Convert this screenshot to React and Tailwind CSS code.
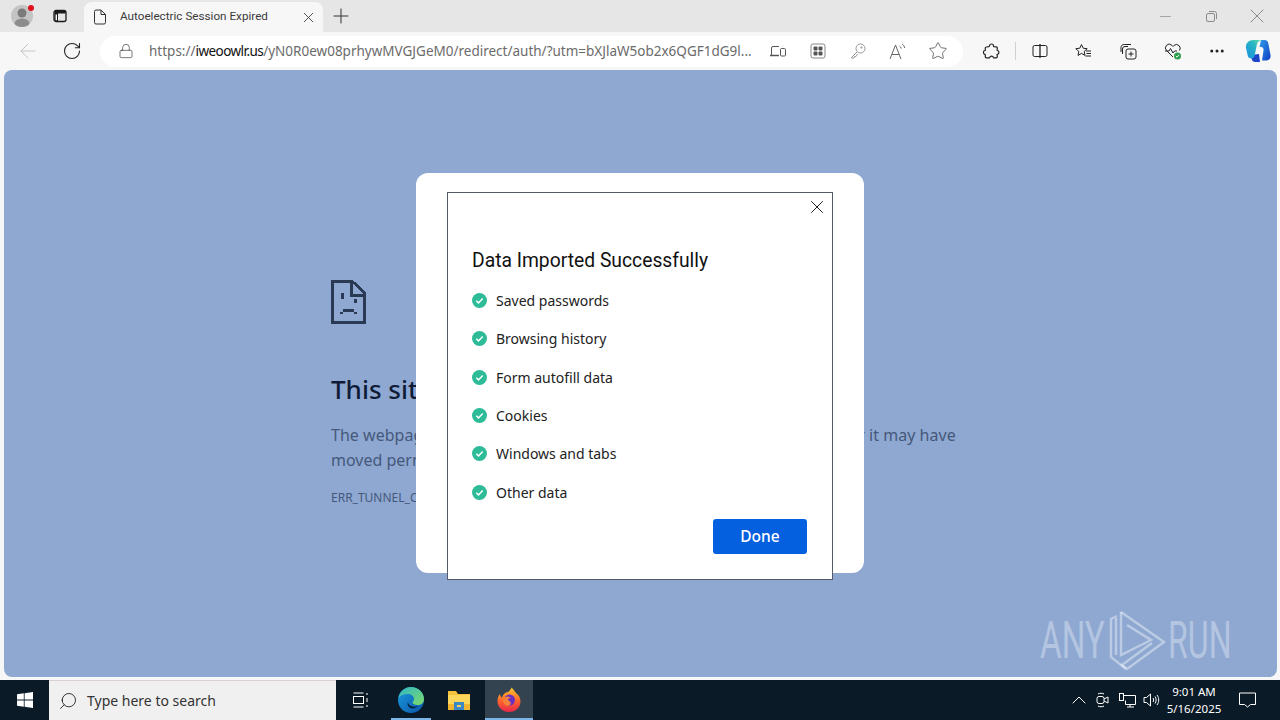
import React from "react";
import { ArrowLeft, RotateCw, Lock, Star, Plus, X, Minus, MoreHorizontal, Search, ChevronUp } from "lucide-react";

const sans = "font-['Noto_Sans','Open_Sans',sans-serif]";
const ui = "font-['Roboto','Noto_Sans',sans-serif]";

function ToolSlot({ w, children }) {
  return <div className={`${w} h-full flex items-center justify-center shrink-0`}>{children}</div>;
}

function Avatar() {
  return (
    <div className="relative w-[22px] h-[22px] rounded-full bg-[#c4c4c4] overflow-hidden flex flex-col items-center">
      <svg width="22" height="22" viewBox="0 0 22 22">
        <circle cx="11" cy="8" r="4.5" fill="#7b7b7b" />
        <ellipse cx="11" cy="19" rx="7.5" ry="5.5" fill="#8c8c8c" />
      </svg>
    </div>
  );
}

function TabStrip() {
  return (
    <div className="h-[32px] bg-[#e6e6e6] flex items-end shrink-0">
      <div className="w-[44px] h-full relative flex items-center justify-center">
        <Avatar />
        <div className="absolute left-[28px] top-[5px] w-[6px] h-[6px] rounded-full bg-[#e0101c]" />
      </div>
      <div className="w-[32px] h-full flex items-center justify-center">
        <svg width="16" height="16" viewBox="0 0 16 16" fill="none">
          <rect x="2" y="2.500" width="12" height="11" rx="2" stroke="#1a1a1a" strokeWidth="1.300" />
          <path d="M2.500 3h11v2.600H6v7.600H2.500z" fill="#1a1a1a" />
          <path d="M3.600 6.600h1.400v5.600H3.600z" fill="#fff" />
        </svg>
      </div>
      <div className="ml-[8px] w-[239px] h-[30px] bg-[#f7f7f7] rounded-t-lg flex items-center">
        <svg className="ml-[9px]" width="14" height="16" viewBox="0 0 14 16" fill="none">
          <path d="M1.500 2.500a1.500 1.500 0 0 1 1.500-1.500h5l4.500 4.500v8a1.500 1.500 0 0 1-1.500 1.500H3a1.500 1.500 0 0 1-1.500-1.500z" stroke="#333" strokeWidth="1" />
          <path d="M8 1v4.500h4.500" stroke="#333" strokeWidth="1" />
        </svg>
        <span className={`ml-[13px] text-[11.700px] text-[#3b3b3b] w-[170px] whitespace-nowrap ${ui}`}>Autoelectric Session Expired</span>
        <X className="ml-[10px] text-[#444]" size={17} strokeWidth={1.300} />
      </div>
      <div className="w-[36px] h-full flex items-center justify-center">
        <Plus size={24} strokeWidth={1} className="text-[#333]" />
      </div>
      <div className="flex-1" />
      <div className="w-[46px] h-full flex items-center justify-center"><Minus size={17} strokeWidth={1} className="text-[#8a8a8a]" /></div>
      <div className="w-[46px] h-full flex items-center justify-center">
        <svg width="11" height="11" viewBox="0 0 11 11" fill="none" stroke="#8a8a8a">
          <rect x="0.500" y="2.500" width="8" height="8" rx="1.500" />
          <path d="M3 .5h5.500a2 2 0 0 1 2 2V8" />
        </svg>
      </div>
      <div className="w-[46px] h-full flex items-center justify-center"><X size={24} strokeWidth={1} className="text-[#8a8a8a]" /></div>
    </div>
  );
}

function CopilotLogo() {
  return (
    <svg width="26" height="26" viewBox="0 0 26 26">
      <defs>
        <linearGradient id="cpa" x1="0" y1="0" x2="1" y2="1"><stop offset="0" stopColor="#2f9be8" /><stop offset="1" stopColor="#0f3fc4" /></linearGradient>
        <linearGradient id="cpb" x1="0" y1="1" x2="1" y2="0"><stop offset="0" stopColor="#1c8fe0" /><stop offset="0.600" stopColor="#24b5c4" /><stop offset="1" stopColor="#6fe0a8" /></linearGradient>
      </defs>
      <path d="M16 2h3.500c2 0 3.300 1.200 3.800 3.200L25.500 17c.6 3-1.300 5.500-4 5.500H17l1.500-10c.3-2-.7-3.500-2.500-3.500h-1.500z" fill="url(#cpa)" />
      <path d="M15 24h-4.500c-2.500 0-3.600-1.500-3.900-3.500l-.6-3.500 8-1z" fill="#1a45c8" />
      <path d="M1 10c-.5-3.500 1.500-6.500 4.500-7.500C7 2 9 2 11 2h6c-3 .5-4.500 2-5.200 5l-2 10c-.4 2-1.300 3.500-3.300 3.500S3 19.500 2.700 17.500z" fill="url(#cpb)" />
    </svg>
  );
}

function Toolbar() {
  return (
    <div className="h-[38px] bg-[#f7f7f7] flex items-center pl-[6px] shrink-0">
      <ToolSlot w="w-[44px]"><ArrowLeft size={24} strokeWidth={0.900} className="text-[#c0c0c0]" /></ToolSlot>
      <ToolSlot w="w-[44px]"><RotateCw size={20} strokeWidth={1.300} className="text-[#222]" /></ToolSlot>
      <div className="ml-[6px] w-[863px] h-[31px] bg-white rounded-full flex items-center shrink-0">
        <Lock size={16} strokeWidth={1.100} className="ml-[18px] text-[#444]" />
        <div className={`ml-[15px] w-[603px] text-[13.500px] whitespace-nowrap overflow-hidden text-[#6b6b6b] ${sans}`}>
          https://<span className="text-[#111] tracking-[-0.550px]">iweoowlr.us</span>/yN0R0ew08prhywMVGJGeM0/redirect/auth/?utm=bXJlaW5ob2x6QGF1dG9l...
        </div>
        <div className="ml-[6px] flex h-full">
          <ToolSlot w="w-[40px]">
            <svg width="16" height="14" viewBox="0 0 16 14" fill="none" stroke="#555" strokeWidth="1">
              <path d="M9 2.500H3a1.500 1.500 0 0 0-1.500 1.500v7" /><path d="M0 11.500h9" strokeWidth="1.500" />
              <rect x="10.500" y="4.500" width="5" height="7.500" rx="1" />
            </svg>
          </ToolSlot>
          <ToolSlot w="w-[40px]">
            <svg width="16" height="16" viewBox="0 0 16 16" fill="none">
              <rect x="1" y="1" width="14" height="14" rx="2" stroke="#888" strokeWidth="1" />
              <rect x="3.500" y="3.500" width="4" height="4" rx="1" fill="#555" /><rect x="8.500" y="3.500" width="4" height="4" rx="1" fill="#555" />
              <rect x="3.500" y="8.500" width="4" height="4" rx="1" fill="#555" /><rect x="8.500" y="8.500" width="4" height="4" rx="1" fill="#555" />
            </svg>
          </ToolSlot>
          <ToolSlot w="w-[40px]">
            <svg width="16" height="16" viewBox="0 0 16 16" fill="none" stroke="#999" strokeWidth="1">
              <circle cx="10.500" cy="5.500" r="4.500" /><path d="M7 9L1.500 14.500V15h2.500l.5-1.500h1.500L7 12l.5-1" /><circle cx="11.500" cy="4.500" r=".7" />
            </svg>
          </ToolSlot>
          <ToolSlot w="w-[40px]">
            <svg width="18" height="17" viewBox="0 0 18 17" fill="none" stroke="#666" strokeWidth="1">
              <path d="M1 16L6.500 2 12 16M3 11.500h7" /><path d="M10.500 3c1 .5 1.500 1.500 1.700 2.500M13 1c1.500.8 2.500 2.500 2.700 4" />
            </svg>
          </ToolSlot>
          <ToolSlot w="w-[40px]"><Star size={20} strokeWidth={1} className="text-[#555]" /></ToolSlot>
        </div>
      </div>
      <div className="ml-[8px] flex h-full items-center">
        <ToolSlot w="w-[40px]">
          <svg width="17" height="17" viewBox="0 0 17 17" fill="none" stroke="#222" strokeWidth="1.200" strokeLinejoin="round">
            <path d="M6.500 3a2 2 0 0 1 4 0l.2.700 2.500.2c.7.100 1.100.600 1.100 1.200l-.2 2.100.600.300a2.100 2.100 0 0 1 0 3.800l-.6.300.2 2c0 .8-.5 1.300-1.200 1.300h-2.400l-.3-.6a2 2 0 0 0-3.700 0l-.3.600H3.500c-.8 0-1.300-.5-1.300-1.300l.2-1.900-.7-.3a2.100 2.100 0 0 1 0-3.900l.7-.3-.2-2c0-.7.500-1.200 1.200-1.200l2.400-.3z" />
          </svg>
        </ToolSlot>
        <div className="w-[8px] h-full flex items-center justify-center"><div className="w-px h-[18px] bg-[#d0d0d0]" /></div>
        <ToolSlot w="w-[42px]">
          <svg width="16" height="16" viewBox="0 0 16 16" fill="none" stroke="#222" strokeWidth="1">
            <rect x="1" y="2.500" width="14" height="11" rx="1.500" /><path d="M8 1v14" strokeWidth="1.300" />
          </svg>
        </ToolSlot>
        <ToolSlot w="w-[45px]">
          <svg width="17" height="16" viewBox="0 0 17 16" fill="none" stroke="#222" strokeWidth="1">
            <path d="M6.500 1.500l1.700 3.700 4 .5-3 2.700.8 4-3.500-2-3.500 2 .8-4-3-2.700 4-.5z" />
            <path d="M11 8h5M11.500 10.500h4.500M10.500 13h5.500" />
          </svg>
        </ToolSlot>
        <ToolSlot w="w-[45px]">
          <svg width="17" height="17" viewBox="0 0 17 17" fill="none" stroke="#222" strokeWidth="1">
            <rect x="6" y="6" width="10" height="10" rx="2" />
            <path d="M8 3.500H5a2.500 2.500 0 0 0-2.500 2.500v5" /><path d="M11 1.500H4.500A3 3 0 0 0 1 4.500V9" />
            <path d="M11 8.500v5M8.500 11h5" />
          </svg>
        </ToolSlot>
        <ToolSlot w="w-[44px]">
          <svg width="18" height="18" viewBox="0 0 18 18" fill="none">
            <path d="M9 15L2.500 8.500a3.800 3.800 0 0 1 0-5.200 3.800 3.800 0 0 1 5.400 0L9 4.500l1.100-1.200a3.800 3.800 0 0 1 5.400 5.200" stroke="#222" strokeWidth="1" />
            <path d="M1 9h4l1.500-2.500L9 11l1.500-2H13" stroke="#222" strokeWidth="1" />
            <circle cx="13.500" cy="14" r="3.500" fill="#2e9e4f" />
            <path d="M11.800 14l1.200 1.200 2.200-2.300" stroke="#fff" strokeWidth="1" />
          </svg>
        </ToolSlot>
        <ToolSlot w="w-[43px]"><MoreHorizontal size={18} strokeWidth={2} className="text-[#222]" /></ToolSlot>
        <ToolSlot w="w-[40px]"><CopilotLogo /></ToolSlot>
      </div>
    </div>
  );
}

function SadPage() {
  return (
    <svg width="35" height="44" viewBox="0 0 36 46" fill="none" shapeRendering="crispEdges">
      <path d="M1.500 1.500H22L34.500 13v31H1.500z" stroke="#2a3a55" strokeWidth="3" />
      <path d="M21 2v14h13" stroke="#2a3a55" strokeWidth="3" />
      <rect x="10" y="14" width="3" height="6" fill="#2a3a55" />
      <rect x="24" y="20" width="3" height="4" fill="#2a3a55" />
      <rect x="12" y="30" width="12" height="3" fill="#2a3a55" />
      <rect x="9" y="33" width="3" height="3" fill="#2a3a55" />
      <rect x="24" y="33" width="3" height="3" fill="#2a3a55" />
    </svg>
  );
}

const items = ["Saved passwords", "Browsing history", "Form autofill data", "Cookies", "Windows and tabs", "Other data"];

function Check() {
  return (
    <svg width="15" height="15" viewBox="0 0 15 15" className="shrink-0">
      <circle cx="7.500" cy="7.500" r="7.500" fill="#2dbb98" />
      <path d="M4.300 7.800l2.200 2.100 4.200-4.300" fill="none" stroke="#fff" strokeWidth="1.500" />
    </svg>
  );
}

function Dialog() {
  return (
    <div className="absolute left-[412px] top-[103px] w-[448px] h-[400px] bg-white rounded-xl">
      <div className="absolute left-[31px] top-[19px] w-[386px] h-[388px] bg-white border border-[#555b66] pl-[24px] pt-[54px]">
        <X size={22} strokeWidth={1} className="absolute right-[4px] top-[3px] text-[#111]" />
        <h1 className={`text-[19.300px] leading-[28px] text-[#111] ${ui}`}>Data Imported Successfully</h1>
        <ul className="mt-[14.400px] flex flex-col gap-[16.400px]">
          {items.map((t) => (
            <li key={t} className={`flex items-center h-[22px] gap-[9px] text-[14px] text-[#222] ${sans}`}>
              <Check />
              <span>{t}</span>
            </li>
          ))}
        </ul>
        <div className="flex justify-end pr-[25px] mt-[15.600px]">
          <button className={`w-[94px] h-[35px] rounded-[3px] bg-[#0560df] text-white text-[15.500px] font-medium ${sans}`}>Done</button>
        </div>
      </div>
    </div>
  );
}

function Watermark() {
  return (
    <div className="absolute right-[47px] bottom-[2px] flex items-center text-white/35 font-['Roboto',sans-serif] text-[51px] font-normal leading-none select-none">
      <span className="inline-block w-[60px] origin-left scale-x-[0.65] whitespace-nowrap">ANY</span>
      <svg width="65" height="70" viewBox="0 0 65 70" fill="none" stroke="#ffffff" strokeOpacity="0.4" strokeWidth="2.500" className="ml-[5px] -mr-[2px]">
        <path d="M16 7L59 37 22 64 17 60 47 38" />
        <path d="M16 7V50L46 35 22 20" />
        <path d="M12 11L6 14V52L21 64" />
        <path d="M11 13V50" />
      </svg>
      <span className="inline-block w-[62px] origin-left scale-x-[0.63] whitespace-nowrap">RUN</span>
    </div>
  );
}

function ErrorPage() {
  return (
    <div className="flex-1 ml-[4px] mr-[3px] bg-[#8ea8d2] rounded-lg relative overflow-hidden">
      <div className={`pl-[327px] pt-[210px] w-[955px] ${sans}`}>
        <SadPage />
        <h2 className="mt-[47px] text-[26px] leading-[36px] font-medium text-[#101c36] whitespace-nowrap">This site can't be reached</h2>
        <p className="mt-[16px] text-[16px] leading-[25px] text-[#46587a]">
          <span className="block whitespace-nowrap tracking-[0.030px]">The webpage at https://iweoowlr.us/yN0 might be temporarily down or it may have</span>
          <span className="block">moved permanently to a new web address.</span>
        </p>
        <p className="mt-[16px] text-[12px] leading-[18px] text-[#46587a]">ERR_TUNNEL_CONNECTION_FAILED</p>
      </div>
      <Dialog />
      <Watermark />
    </div>
  );
}

function EdgeLogo() {
  return (
    <svg width="26" height="26" viewBox="0 0 26 26">
      <defs>
        <linearGradient id="eg1" x1="0" y1="0" x2="1" y2="1"><stop offset="0" stopColor="#2fb5c4" /><stop offset="1" stopColor="#7fdc6a" /></linearGradient>
        <linearGradient id="eg2" x1="0" y1="0" x2="1" y2="1"><stop offset="0" stopColor="#1a9ce0" /><stop offset="1" stopColor="#0c55a8" /></linearGradient>
      </defs>
      <circle cx="13" cy="13" r="13" fill="url(#eg2)" />
      <path d="M0.500 11C2 4 7 0 13 0c7 0 13 5 13 12 0 4-3 6-6.500 6-3 0-5-1-5-2.500 0-1 1.500-1.500 1.500-3.500 0-3-3-5-6-5C6 7 2.500 8 0.500 11z" fill="url(#eg1)" />
      <path d="M10 15c0 2 1.500 4 4.500 4.500 2 .3 4 .1 5.500-.5-1.500 1.500-4 3-6.500 2.500C10 20.500 9 17 10 15z" fill="#06253f" />
    </svg>
  );
}

function FolderLogo() {
  return (
    <svg width="24" height="22" viewBox="0 0 24 22">
      <path d="M1 2h8l2 3h12v16H1z" fill="#f3c13a" />
      <rect x="1" y="6" width="22" height="15" fill="#fbd75c" />
      <rect x="1" y="15" width="22" height="6" fill="#f2b632" />
      <rect x="7" y="13" width="10" height="8" fill="#3a88c8" />
      <rect x="10" y="16" width="4" height="2" fill="#fbd75c" />
    </svg>
  );
}

function FirefoxLogo() {
  return (
    <svg width="26" height="26" viewBox="0 0 26 26">
      <defs>
        <linearGradient id="ff1" x1="0.500" y1="0" x2="0.500" y2="1"><stop offset="0" stopColor="#ffc92e" /><stop offset="0.500" stopColor="#ff6a2b" /><stop offset="1" stopColor="#e8264b" /></linearGradient>
      </defs>
      <path d="M13 25C6 25 1.500 20 1.500 14c0-3 1-5.500 2.500-7 0 2 .8 3 2 3.500C7 7 9 5.500 12 5c2-1.500 3-3 3.500-4.500C18 3 19 5 20 6c3 2 4.500 5 4.500 8.500C24.500 20 20 25 13 25z" fill="url(#ff1)" />
      <circle cx="13.500" cy="13" r="5.500" fill="#6a2fc0" />
      <path d="M7 12c2-3 6-3 8-1-2 0-3 1-3 2 2 1 4 3 2 5-3 2-7 0-7-6z" fill="#ff8a2e" opacity="0.900" />
    </svg>
  );
}

function Taskbar() {
  return (
    <div className="h-[40px] bg-[#0a1a27] flex items-center shrink-0 text-white">
      <div className="w-[49px] h-full flex items-center justify-center">
        <svg width="16" height="16" viewBox="0 0 16 16" fill="#fff">
          <path d="M0 2.300L6.800 1.300V7.600H0zM7.600 1.200L16 0V7.600H7.600zM0 8.400H6.800V14.700L0 13.700zM7.600 8.400H16V16L7.600 14.800z" />
        </svg>
      </div>
      <div className="w-[287px] h-full bg-[#f0f0f0] flex items-center border-t border-[#d8d0d4]">
        <Search size={20} strokeWidth={1} className="ml-[9px] text-[#111] -scale-x-100" />
        <span className={`ml-[9px] text-[14px] text-[#333] ${sans}`}>Type here to search</span>
      </div>
      <div className="w-[49px] h-full flex items-center justify-center">
        <svg width="16" height="16" viewBox="0 0 16 16" fill="none" stroke="#fff" strokeWidth="1">
          <path d="M0.500 1h10M0.500 15h10" /><rect x="0.500" y="4.500" width="10" height="7" /><path d="M14 1v2M14 6v4M14 13v2" />
        </svg>
      </div>
      <div className="w-[2px]" />
      <div className="w-[48px] h-full flex items-center justify-center relative">
        <EdgeLogo />
        <div className="absolute left-[4px] right-[4px] bottom-0 h-[2px] bg-[#7cb6e8]" />
      </div>
      <div className="w-[48px] h-full flex items-center justify-center"><FolderLogo /></div>
      <div className="ml-[2px] w-[48px] h-full bg-[#33434f] flex items-center justify-center relative">
        <FirefoxLogo />
        <div className="absolute inset-x-0 bottom-0 h-[2px] bg-[#7cb6e8]" />
      </div>
      <div className="flex-1" />
      <div className="flex items-center h-full">
        <div className="w-[24px] flex justify-center"><ChevronUp size={24} strokeWidth={1} /></div>
        <div className="w-[24px] flex justify-center">
          <svg width="14" height="16" viewBox="0 0 14 16" fill="none" stroke="#fff" strokeWidth="1">
            <rect x="1" y="4.500" width="7" height="7" rx="2" /><path d="M8 7l4-2v6l-4-2" /><path d="M2 2c1-1 5-1 6 0M2 14c1 1 5 1 6 0" />
          </svg>
        </div>
        <div className="w-[24px] flex justify-center">
          <svg width="17" height="16" viewBox="0 0 17 16" fill="none" stroke="#fff" strokeWidth="1">
            <rect x="0.500" y="1.500" width="4" height="7" /><path d="M4.500 3.500h12v9h-10v-4" /><path d="M8 15h7M11 12.500V15" />
          </svg>
        </div>
        <div className="w-[24px] flex justify-center">
          <svg width="17" height="16" viewBox="0 0 17 16" fill="none" stroke="#fff" strokeWidth="1">
            <path d="M1 5.500h2.500L7.500 2v12L3.500 10.500H1z" /><path d="M10 6c.8 1.200.8 2.800 0 4M12 4.500c1.500 2 1.500 5 0 7M14 3c2.300 3 2.300 7 0 10" />
          </svg>
        </div>
        <div className={`w-[62px] flex flex-col items-center text-[11.500px] leading-[17px] ${sans}`}>
          <span>9:01 AM</span>
          <span>5/16/2025</span>
        </div>
        <div className="w-[44px] flex justify-center">
          <svg width="17" height="16" viewBox="0 0 17 16" fill="none" stroke="#fff" strokeWidth="1">
            <path d="M.5 1h16v11.500h-5L8.500 15l-3-2.500H.5z" />
          </svg>
        </div>
        <div className="w-[11px]" />
      </div>
    </div>
  );
}

export default function App() {
  return (
    <div className="w-[1280px] h-[720px] overflow-hidden flex flex-col bg-[#f7f7f7]">
      <TabStrip />
      <Toolbar />
      <div className="flex-1 flex flex-col pb-[3px] min-h-0">
        <ErrorPage />
      </div>
      <Taskbar />
    </div>
  );
}
